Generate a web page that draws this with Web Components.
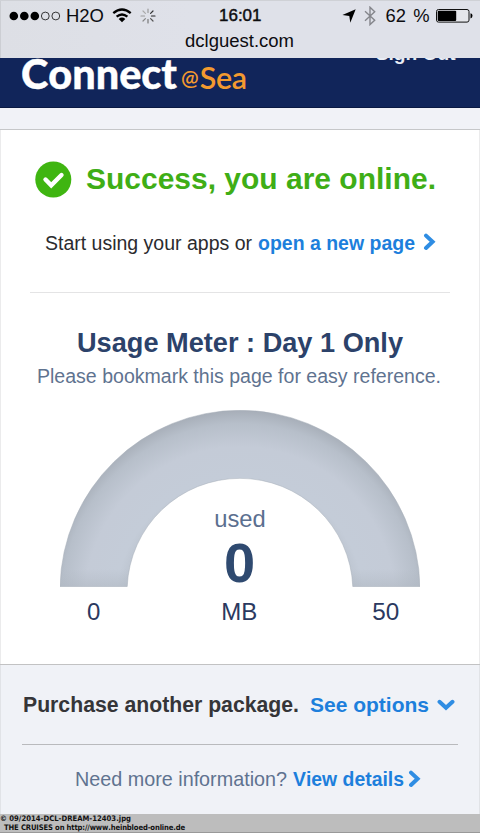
<!DOCTYPE html>
<html lang="en">
<head>
<meta charset="utf-8">
<title>Connect@Sea</title>
<style>
body{margin:0;background:#fff;font-family:"Liberation Sans",Arial,sans-serif}
</style>
</head>
<body>
<connect-app></connect-app>
<script>
/* Text run that spans the given width: the size grows or shrinks by at most 7%, tracking takes the rest. */
class FitText extends HTMLElement{
  connectedCallback(){
    const r=this.attachShadow({mode:'open'});
    r.innerHTML='<style>:host{display:inline-block;white-space:pre;flex:none;font-kerning:none}</style><slot></slot>';
    const size=+this.getAttribute('size'), w=+this.getAttribute('w'), n=[...this.textContent].length;
    this.style.fontSize=size+'px';
    if(w&&n>1){
      const k=Math.min(1.07,Math.max(.95,w/this.getBoundingClientRect().width));
      this.style.fontSize=(size*k).toFixed(2)+'px';
      this.style.letterSpacing=((w-this.getBoundingClientRect().width)/n).toFixed(3)+'px';
    }
  }
}
customElements.define('fit-text',FitText);

/* Horizontal line of content: height h, left padding x. */
class UiRow extends HTMLElement{
  connectedCallback(){
    const r=this.attachShadow({mode:'open'});
    r.innerHTML='<style>:host{display:flex;align-items:center;box-sizing:border-box;flex:none}::slotted(*){flex:none}</style><slot></slot>';
    const h=this.getAttribute('h');
    this.style.height=this.style.lineHeight=h+'px';
    this.style.paddingLeft=(this.getAttribute('x')||0)+'px';
  }
}
customElements.define('ui-row',UiRow);

class ChevronIcon extends HTMLElement{
  connectedCallback(){
    const down=this.hasAttribute('down');
    this.attachShadow({mode:'open'}).innerHTML='<style>:host{display:block;flex:none}svg{display:block}</style>'+
    (down?'<svg width="18" height="12"><path d="M2.5 2.8 9 8.8l6.5-6" fill="none" stroke="#2f8de3" stroke-width="4" stroke-linecap="round"/></svg>'
         :'<svg width="13" height="18"><path d="M3 2.6 9.6 8.8 3 15" fill="none" stroke="#2f8de3" stroke-width="4" stroke-linecap="round"/></svg>');
  }
}
customElements.define('chevron-icon',ChevronIcon);

class StatusBar extends HTMLElement{
  connectedCallback(){
    this.attachShadow({mode:'open'}).innerHTML=`<style>
    :host{display:block;height:58px;box-sizing:border-box;background:linear-gradient(90deg,#dddfe5,#dfe1e9 40%,#dfe1e9);color:#0c0c10;border-top:1px solid #cfd1d6;box-shadow:inset 1px 0 #ccced3;position:relative;z-index:1}
    svg{display:block}.b{-webkit-text-stroke:.45px #111}
    </style>
    <ui-row h="29" x="9">
      <svg width="53" height="12"><g fill="#000"><circle cx="4.8" cy="6" r="4.3"/><circle cx="15.3" cy="6" r="4.3"/><circle cx="25.8" cy="6" r="4.3"/></g><g fill="none" stroke="#222" stroke-width=".9"><circle cx="36.3" cy="6" r="3.9"/><circle cx="46.8" cy="6" r="3.9"/></g></svg>
      <fit-text size="17.6" w="38" style="margin-left:4px">H2O</fit-text>
      <svg width="20" height="15" viewBox="0 0 20 15" style="margin-left:8px"><g fill="none" stroke="#000" stroke-width="2.3"><path d="M1.3 5.2Q10-2.2 18.7 5.2"/><path d="M4.6 8.7Q10 4.2 15.4 8.7"/></g><path d="M6.7 11Q10 8.2 13.3 11L10 14.3Z"/></svg>
      <svg width="16" height="16" viewBox="-8 -8 16 16" style="margin-left:8px"><g stroke="#777" stroke-width="1.2" stroke-linecap="round"><path d="M0-3.5V-7" stroke="#999"/><path d="M2.6-2.6 5-5" stroke="#333"/><path d="M3.5 0H7" stroke="#222"/><path d="M2.6 2.6 5 5" stroke="#555"/><path d="M0 3.5V7"/><path d="M-2.6 2.6-5 5" stroke="#888"/><path d="M-3.5 0H-7" stroke="#999"/><path d="M-2.6-2.6-5-5" stroke="#aaa"/></g></svg>
      <fit-text class="b" size="17" w="42.5" style="margin-left:63px">16:01</fit-text>
      <svg width="14" height="14" viewBox="0 0 14 14" style="margin-left:80px"><path d="M13.7.3 8.3 13.8 7.3 7.1.4 6Z"/></svg>
      <svg width="12" height="20" viewBox="0 0 12 20" style="margin-left:8px"><path d="M1 5.3 10.7 14.2 6 18.6V1.2L10.7 5.7 1 14.7" fill="none" stroke="#85868c" stroke-width="1.4"/></svg>
      <fit-text size="17.5" w="44" style="margin-left:10px;word-spacing:2px">62 %</fit-text>
      <svg width="37" height="14" viewBox="0 0 37 14" style="margin-left:6px"><rect x=".5" y=".5" width="32.5" height="12.6" rx="2" fill="#e5e6eb" stroke="#111"/><rect x="1.7" y="1.7" width="18.5" height="10.2" rx="1"/><path d="M34.5 4.2q2 .4 2 2.6t-2 2.6z"/></svg>
    </ui-row>
    <ui-row h="21" x="185"><fit-text size="18.3" w="109">dclguest.com</fit-text></ui-row>`;
  }
}
customElements.define('status-bar',StatusBar);

class BrandHeader extends HTMLElement{
  connectedCallback(){
    this.attachShadow({mode:'open'}).innerHTML=`<style>
    :host{display:block;height:50px;background:#11255a;box-sizing:border-box;border-bottom:1px solid #0a1942;color:#fff}
    .r{display:flex;align-items:baseline;font-family:Lato,sans-serif;height:50px;padding-left:21px;line-height:34px;margin-top:-2px}
    .o{color:#f39a2f}
    .s{align-self:flex-start;font:bold 19px/20px "Liberation Sans",sans-serif;color:#e9edf5;margin:-12px 0 0 129px}
    .at{position:relative;top:-4px}
    </style><div class="r"><fit-text size="41" w="156" style="font-weight:900;-webkit-text-stroke:.4px #fff">Connect</fit-text><fit-text class="o at" size="21" w="19" style="margin-left:4px;font-weight:600">@</fit-text><fit-text class="o" size="32" w="47" style="margin-left:1px;font-weight:600">Sea</fit-text><fit-text class="s" size="19" w="80">Sign Out</fit-text></div>`;
  }
}
customElements.define('brand-header',BrandHeader);

class UsageGauge extends HTMLElement{
  connectedCallback(){
    const arc='M.04 176.5A180 180 0 0 1 359.96 176.5H292.8A112.9 112.9 0 0 0 67.2 176.5Z';
    this.attachShadow({mode:'open'}).innerHTML=`<style>
    :host{display:grid;width:360px;height:177px;margin:0 auto}
    svg,.v{grid-area:1/1}.v{display:flex;flex-direction:column;align-items:center;padding-top:95px}
    </style>
    <svg width="360" height="177" viewBox="0 0 360 177"><defs><radialGradient id="g" gradientUnits="userSpaceOnUse" cx="180" cy="192" r="194"><stop offset=".57" stop-color="#bbc3ce"/><stop offset=".64" stop-color="#c4ccd8"/><stop offset=".8" stop-color="#c4cbd7"/><stop offset=".92" stop-color="#b7bfca"/><stop offset="1" stop-color="#a4abb5"/></radialGradient>
    <linearGradient id="b" x1="0" x2="0" y1="0" y2="1"><stop offset=".9" stop-color="#b0b8c2" stop-opacity="0"/><stop offset="1" stop-color="#aeb6c0" stop-opacity=".5"/></linearGradient></defs>
    <path d="${arc}" fill="url(#g)" stroke="#a7aeb8" stroke-width=".5"/><path d="${arc}" fill="url(#b)"/></svg>
    <div class="v"><ui-row h="28"><fit-text size="22.5" w="51.5" style="color:#5b6f8f">used</fit-text></ui-row>
    <ui-row h="59"><fit-text size="56" style="color:#2f4a70;font-weight:bold;margin-left:-1px">0</fit-text></ui-row></div>`;
  }
}
customElements.define('usage-gauge',UsageGauge);

class ConnectApp extends HTMLElement{
  connectedCallback(){
    this.attachShadow({mode:'open'}).innerHTML=`<style>
    :host{display:flex;flex-direction:column;width:480px;height:833px;overflow:hidden;background:#f0f2f7}
    .band{height:22px;box-sizing:border-box;border-bottom:1px solid #c6c7c9;background:#f1f2f7;flex:none}
    status-bar,brand-header{flex:none}
    main{height:534px;flex:none;background:#fff;box-shadow:inset 1px 0 #ebebec,inset -1px 0 #ebebec}
    footer{height:150px;box-sizing:border-box;flex:none;border-top:1px solid #c2c2c3;background:#f0f2f7;box-shadow:inset 1px 0 #e1e3e7,inset -1px 0 #e1e3e7}
    hr{border:0;height:1px;margin:0}
    .link{color:#1d7fdc;font-weight:bold}.navy{color:#2c426a}.muted{color:#5f7390}
    svg{display:block}
    .credit{height:19px;background:#bdbdbd;border-bottom:1px solid #999;box-sizing:border-box;flex:none;font-family:"DejaVu Sans Condensed","DejaVu Sans",sans-serif;font-stretch:condensed;font-weight:700;color:#111}
    .ticks{color:#2b3960}
    </style>
    <status-bar></status-bar><brand-header></brand-header><div class="band"></div>
    <main>
      <ui-row h="98" x="35">
        <svg width="37" height="37"><circle cx="18.3" cy="18.5" r="18" fill="#3fb511"/><path d="m10.5 18.5 5.7 5.8L26.5 14" fill="none" stroke="#fff" stroke-width="4.4" stroke-linecap="round"/></svg>
        <fit-text size="29.5" w="350" style="color:#3fae16;font-weight:bold;margin-left:14px">Success, you are online.</fit-text>
      </ui-row>
      <ui-row h="30" x="45"><fit-text size="19" w="207" style="color:#2b2b2e">Start using your apps or</fit-text><fit-text class="link" size="19" w="157" style="margin-left:6px">open a new page</fit-text><chevron-icon style="margin-left:8px;margin-top:-3px"></chevron-icon></ui-row>
      <hr style="background:#e4e4e5;margin:34px 30px 0">
      <ui-row h="36" x="77" style="margin-top:32px"><fit-text class="navy" size="26.5" w="326" style="font-weight:bold">Usage Meter : Day 1 Only</fit-text></ui-row>
      <ui-row h="30" x="37"><fit-text class="muted" size="19" w="404">Please bookmark this page for easy reference.</fit-text></ui-row>
      <usage-gauge style="margin-top:19px"></usage-gauge>
      <ui-row h="30" x="87" class="ticks" style="margin-top:10px"><fit-text size="24">0</fit-text><fit-text size="23.5" w="36" style="margin-left:121px">MB</fit-text><fit-text size="23.5" w="27" style="margin-left:115px">50</fit-text></ui-row>
    </main>
    <footer>
      <ui-row h="79" x="23"><fit-text size="20" w="276" style="font-weight:bold;color:#353538">Purchase another package.</fit-text><fit-text class="link" size="20" w="119" style="margin-left:11px">See options</fit-text><chevron-icon down style="margin-left:8px"></chevron-icon></ui-row>
      <hr style="background:#b9babd;margin:0 22px">
      <ui-row h="69" x="75"><fit-text class="muted" size="19.5" w="212">Need more information?</fit-text><fit-text class="link" size="19.5" w="111" style="margin-left:6px">View details</fit-text><chevron-icon style="margin-left:4px;margin-top:-2px"></chevron-icon></ui-row>
    </footer>
    <div class="credit"><ui-row h="9"><fit-text size="8" w="131">© 09/2014-DCL-DREAM-12403.jpg</fit-text></ui-row><ui-row h="10" x="4"><fit-text size="8" w="181">THE CRUISES on http://www.heinbloed-online.de</fit-text></ui-row></div>`;
  }
}
customElements.define('connect-app',ConnectApp);
</script>
</body>
</html>
